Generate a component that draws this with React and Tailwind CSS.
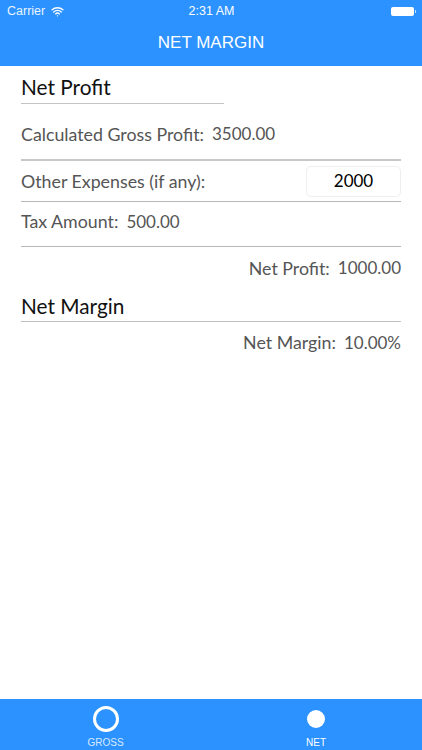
import { Wifi } from 'lucide-react';

const SANS = { fontFamily: '"Liberation Sans", Arial, sans-serif' };

function Row({ label, value, right }) {
  return (
    <div className={`flex h-full items-center gap-[8px] text-[17.8px] text-[#555555] ${right ? 'justify-end' : ''}`}>
      <span>{label}</span>
      <span className="text-[17px]">{value}</span>
    </div>
  );
}

export default function App() {
  return (
    <div className="flex h-[750px] w-[422px] flex-col overflow-hidden bg-white font-['Lato',sans-serif]">
      {/* nav bar */}
      <header className="h-[66px] shrink-0 bg-[#2b92ff] text-white" style={SANS}>
        <div className="flex h-[22px] items-center justify-between pl-[7px] pr-[6px] text-[12.5px]">
          <div className="flex w-[120px] items-center gap-[6px]">
            <span className="opacity-90">Carrier</span>
            <Wifi size={13} strokeWidth={2.5} />
          </div>
          <span>2:31 AM</span>
          <div className="flex w-[120px] items-center justify-end">
            <div className="h-[9px] w-[23px] rounded-[2px] bg-white" />
            <div className="ml-px h-[3px] w-px bg-white/70" />
          </div>
        </div>
        <div className="flex h-[44px] items-center justify-center pb-[2px] text-[17px]">NET MARGIN</div>
      </header>

      {/* calculation */}
      <main className="flex-1 px-[21px]">
        <div className="h-[38px] w-[203px] border-b border-[#c4c4c4] pt-[5px] text-[20.8px] leading-[32px] text-[#111111]">
          Net Profit
        </div>
        <div className="h-[57px] border-b-2 border-[#c8c8c8] pt-[5px]">
          <Row label="Calculated Gross Profit:" value="3500.00" />
        </div>
        <div className="flex h-[41px] items-center justify-between border-b border-[#b8b8b8] text-[17.8px] text-[#555555]">
          <span>Other Expenses (if any):</span>
          <div className="flex h-[31px] w-[95px] items-center justify-center rounded-[5px] border border-[#efefef] pb-px text-[17px] text-black">
            2000
          </div>
        </div>
        <div className="h-[45px] border-b border-[#b8b8b8] pb-[5px]">
          <Row label="Tax Amount:" value="500.00" />
        </div>
        <div className="h-[44px] pb-[2px]">
          <Row label="Net Profit:" value="1000.00" right />
        </div>
        <div className="h-[31px] border-b border-[#c0c0c0] text-[20.8px] leading-[30px] text-[#111111]">
          Net Margin
        </div>
        <div className="h-[41px]">
          <Row label="Net Margin:" value="10.00%" right />
        </div>
      </main>

      {/* tab bar */}
      <nav className="flex h-[51px] shrink-0 bg-[#2b92ff] text-[10px] text-white" style={SANS}>
        <div className="flex w-[211px] flex-col items-center pt-[7px]">
          <div className="h-[26px] w-[26px] rounded-full border-[3px] border-white" />
          <span className="mt-[5px] leading-[12px] opacity-80">GROSS</span>
        </div>
        <div className="flex w-[210px] flex-col items-center pt-[11px]">
          <div className="h-[18px] w-[18px] rounded-full bg-white" />
          <span className="mt-[9px] leading-[12px]">NET</span>
        </div>
      </nav>
    </div>
  );
}
